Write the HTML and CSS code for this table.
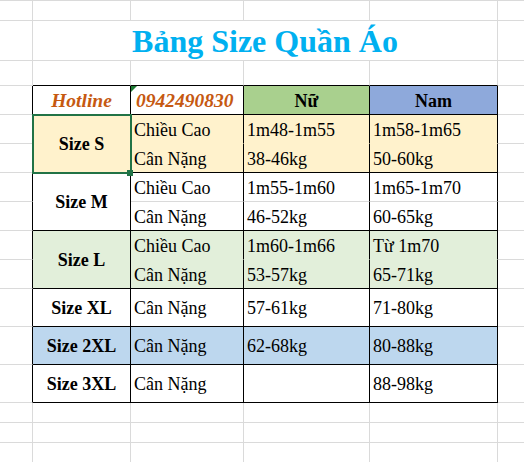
FILE: index.html
```html
<!DOCTYPE html>
<html lang="vi">
<head>
<meta charset="utf-8">
<title>Bảng Size Quần Áo</title>
<link rel="stylesheet" href="styles.css">
</head>
<body>
<div class="sheet">
  <div class="c"></div><div class="c"></div><div class="c"></div><div class="c"></div><div class="c"></div><div class="c edge"></div>

  <div class="c"></div><div class="c title">Bảng Size Quần Áo</div><div class="c edge"></div>

  <div class="c"></div><div class="c bb"></div><div class="c bb"></div><div class="c bb"></div><div class="c bb"></div><div class="c edge"></div>

  <div class="c br"></div>
  <div class="c bt hot">Hotline</div>
  <div class="c bt phone"><span class="tri"></span>0942490830</div>
  <div class="c bt hd nu">Nữ</div>
  <div class="c bt hd nam">Nam</div>
  <div class="c edge"></div>

  <div class="c br"></div>
  <div class="c bt size two yel sel">Size S<span class="selbox"></span><span class="handle"></span></div>
  <div class="c bt yel subc">Chiều Cao</div>
  <div class="c bt yel subc">1m48-1m55</div>
  <div class="c bt yel subc">1m58-1m65</div>
  <div class="c edge"></div>
  <div class="c br"></div>
  <div class="c bt yel">Cân Nặng</div>
  <div class="c bt yel">38-46kg</div>
  <div class="c bt yel">50-60kg</div>
  <div class="c edge"></div>

  <div class="c br"></div>
  <div class="c bt size two">Size M</div>
  <div class="c bt subw">Chiều Cao</div>
  <div class="c bt subw">1m55-1m60</div>
  <div class="c bt subw">1m65-1m70</div>
  <div class="c edge"></div>
  <div class="c br"></div>
  <div class="c bt">Cân Nặng</div>
  <div class="c bt">46-52kg</div>
  <div class="c bt">60-65kg</div>
  <div class="c edge"></div>

  <div class="c br"></div>
  <div class="c bt size two grn">Size L</div>
  <div class="c bt grn subc">Chiều Cao</div>
  <div class="c bt grn subc">1m60-1m66</div>
  <div class="c bt grn subc">Từ 1m70</div>
  <div class="c edge"></div>
  <div class="c br"></div>
  <div class="c bt grn">Cân Nặng</div>
  <div class="c bt grn">53-57kg</div>
  <div class="c bt grn">65-71kg</div>
  <div class="c edge"></div>

  <div class="c br"></div>
  <div class="c bt size">Size XL</div>
  <div class="c bt">Cân Nặng</div>
  <div class="c bt">57-61kg</div>
  <div class="c bt">71-80kg</div>
  <div class="c edge"></div>

  <div class="c br"></div>
  <div class="c bt size blu">Size 2XL</div>
  <div class="c bt blu">Cân Nặng</div>
  <div class="c bt blu">62-68kg</div>
  <div class="c bt blu">80-88kg</div>
  <div class="c edge"></div>

  <div class="c br"></div>
  <div class="c bt size">Size 3XL</div>
  <div class="c bt">Cân Nặng</div>
  <div class="c bt"></div>
  <div class="c bt">88-98kg</div>
  <div class="c edge"></div>

  <div class="c"></div><div class="c"></div><div class="c"></div><div class="c"></div><div class="c"></div><div class="c edge"></div>
  <div class="c"></div><div class="c"></div><div class="c"></div><div class="c"></div><div class="c"></div><div class="c edge"></div>
  <div class="c last"></div><div class="c last"></div><div class="c last"></div><div class="c last"></div><div class="c last"></div><div class="c edge last"></div>
</div>
</body>
</html>
```

FILE: styles.css
```css
html, body {
  margin: 0;
  padding: 0;
  background: #ffffff;
}
body {
  width: 524px;
  height: 462px;
  overflow: hidden;
}
.sheet {
  display: grid;
  grid-template-columns: 33px 98px 113px 126px 128px 26px;
  grid-template-rows: 20px 40px 25px 29px 29px 29px 29px 29px 29px 29px 38px 38px 38px 20px 20px 19px;
  border-top: 1px solid #dadada;
  font-family: "Liberation Serif", "Times New Roman", serif;
  font-size: 18px;
  color: #000000;
}
.c {
  box-sizing: border-box;
  border-right: 1px solid #dadada;
  border-bottom: 1px solid #dadada;
  display: flex;
  align-items: center;
  padding: 2px 3px 0 3px;
  white-space: nowrap;
  min-width: 0;
}
.edge { border-right: 0; }
.last { border-bottom: 0; }
.title {
  grid-column: span 4;
  justify-content: center;
  align-items: flex-end;
  padding: 0;
  font-size: 32px;
  font-weight: bold;
  color: #00b0f0;
}
.bb { border-bottom-color: #000000; }
.br { border-right-color: #000000; }
.bt {
  border-right-color: #000000;
  border-bottom-color: #000000;
}
.hot {
  justify-content: center;
  font-style: italic;
  font-weight: bold;
  font-size: 19.5px;
  color: #c65911;
}
.phone {
  position: relative;
  padding-left: 5px;
  font-style: italic;
  font-weight: bold;
  font-size: 19.5px;
  color: #c65911;
}
.tri {
  position: absolute;
  left: 0;
  top: 0;
  width: 0;
  height: 0;
  border-top: 6px solid #1e7b34;
  border-right: 6px solid transparent;
}
.hd {
  justify-content: center;
  font-weight: bold;
}
.nu { background: #a9d08e; }
.nam { background: #8ea9db; }
.size {
  justify-content: center;
  font-weight: bold;
}
.two { grid-row: span 2; }
.yel { background: #fff2cc; }
.grn { background: #e2efda; }
.blu { background: #bdd7ee; }
.yel.subc { border-bottom-color: #fff2cc; }
.grn.subc { border-bottom-color: #e2efda; }
.subw { border-bottom-color: #dadada; }
.sel { position: relative; }
.selbox {
  position: absolute;
  left: -1px;
  top: -1px;
  right: -2px;
  bottom: -2px;
  border: 2px solid #217346;
  box-sizing: border-box;
}
.handle {
  position: absolute;
  right: -3px;
  bottom: -4px;
  width: 6px;
  height: 6px;
  background: #217346;
  z-index: 2;
}
```
